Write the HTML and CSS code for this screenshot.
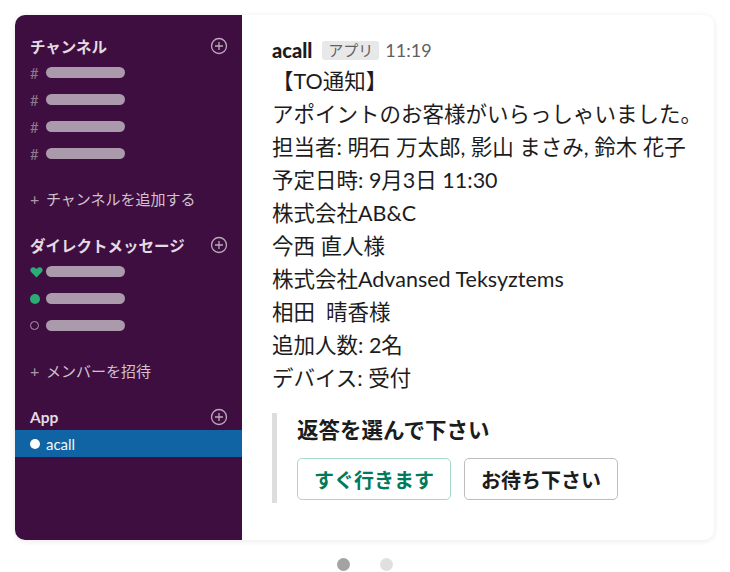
FILE: index.html
```html
<!DOCTYPE html>
<html lang="ja">
<head>
<meta charset="utf-8">
<title>acall Slack</title>
<link rel="stylesheet" href="styles.css">
</head>
<body>
<div class="card">
  <aside class="sidebar">
    <div class="section">
      <div class="sec-head"><span>チャンネル</span><span class="plus-circle"><svg viewBox="0 0 18 18" width="18" height="18"><circle cx="9" cy="9" r="7.5" fill="none" stroke="currentColor" stroke-width="1.3"/><path d="M9 5v8M5 9h8" stroke="currentColor" stroke-width="1.3"/></svg></span></div>
      <div class="row"><span class="mark hash">#</span><span class="bar"></span></div>
      <div class="row"><span class="mark hash">#</span><span class="bar"></span></div>
      <div class="row"><span class="mark hash">#</span><span class="bar"></span></div>
      <div class="row"><span class="mark hash">#</span><span class="bar"></span></div>
    </div>
    <div class="row add"><span class="mark plus">+</span><span>チャンネルを追加する</span></div>

    <div class="section">
      <div class="sec-head"><span>ダイレクトメッセージ</span><span class="plus-circle"><svg viewBox="0 0 18 18" width="18" height="18"><circle cx="9" cy="9" r="7.5" fill="none" stroke="currentColor" stroke-width="1.3"/><path d="M9 5v8M5 9h8" stroke="currentColor" stroke-width="1.3"/></svg></span></div>
      <div class="row"><span class="mark"><svg viewBox="0 0 12 11" width="13" height="12"><path d="M6 10.5 1 5.6C-.4 4.2.3 1 3 1c1.4 0 2.3.8 3 1.8C6.7 1.8 7.6 1 9 1c2.7 0 3.4 3.2 2 4.6z" fill="#2bac76"/></svg></span><span class="bar"></span></div>
      <div class="row"><span class="mark"><span class="dot-on"></span></span><span class="bar"></span></div>
      <div class="row"><span class="mark"><span class="dot-off"></span></span><span class="bar"></span></div>
    </div>
    <div class="row add"><span class="mark plus">+</span><span>メンバーを招待</span></div>

    <div class="section">
      <div class="sec-head"><span>App</span><span class="plus-circle"><svg viewBox="0 0 18 18" width="18" height="18"><circle cx="9" cy="9" r="7.5" fill="none" stroke="currentColor" stroke-width="1.3"/><path d="M9 5v8M5 9h8" stroke="currentColor" stroke-width="1.3"/></svg></span></div>
      <div class="row active"><span class="mark"><span class="dot-white"></span></span><span>acall</span></div>
    </div>
  </aside>

  <main class="main">
    <div class="msg-head">
      <span class="sender">acall</span>
      <span class="badge">アプリ</span>
      <span class="time">11:19</span>
    </div>
    <div class="msg-body">
      <p class="bracket">【TO通知】</p>
      <p>アポイントのお客様がいらっしゃいました。</p>
      <p>担当者: 明石 万太郎, 影山 まさみ, 鈴木 花子</p>
      <p>予定日時: 9月3日 11:30</p>
      <p>株式会社AB&amp;C</p>
      <p>今西 直人様</p>
      <p>株式会社Advansed Teksyztems</p>
      <p>相田&nbsp; 晴香様</p>
      <p>追加人数: 2名</p>
      <p>デバイス: 受付</p>
    </div>
    <div class="attachment">
      <div class="att-title">返答を選んで下さい</div>
      <div class="actions">
        <button class="btn primary">すぐ行きます</button>
        <button class="btn">お待ち下さい</button>
      </div>
    </div>
  </main>
</div>
<div class="pager">
  <span class="pdot on"></span>
  <span class="pdot"></span>
</div>
</body>
</html>
```
FILE: styles.css
```css
* { box-sizing: border-box; }
html, body { margin: 0; padding: 0; background: #ffffff; }
body {
  padding: 15px 16px 0 15px;
  font-family: "Lato", "Noto Sans CJK JP", sans-serif;
  color: #1d1c1d;
}
.card {
  display: flex;
  width: 699px;
  height: 525px;
  border-radius: 10px;
  overflow: hidden;
  background: #fff;
  box-shadow: 0 1px 6px rgba(0,0,0,0.09);
}
.sidebar {
  width: 227px;
  flex: none;
  background: #3f0e40;
  padding-top: 17px;
}
.section { display: flex; flex-direction: column; }
.sec-head {
  height: 27px;
  display: flex;
  align-items: center;
  justify-content: space-between;
  padding: 0 14px 0 15px;
  font-size: 15.5px;
  font-weight: 700;
  color: #e3dbe3;
}
.plus-circle { color: #b9aab9; display: flex; }
.row {
  height: 27px;
  display: flex;
  align-items: center;
  padding-left: 15px;
  font-size: 15px;
  color: #cfc3cf;
}
.mark {
  width: 16px;
  flex: none;
  display: flex;
  align-items: center;
}
.hash { color: #8e7a8f; font-size: 15px; }
.plus { color: #a99aa9; font-size: 16px; }
.bar {
  width: 79px;
  height: 11px;
  border-radius: 6px;
  background: #ab99ac;
}
.add { margin: 18px 0 19px; }
.dot-on { width: 10px; height: 10px; border-radius: 50%; background: #2bac76; }
.dot-off { width: 9px; height: 9px; border-radius: 50%; border: 1.6px solid #ab99ac; }
.dot-white { width: 10px; height: 10px; border-radius: 50%; background: #fff; }
.active { background: #1164a3; color: #f2f6fa; }
.main {
  flex: 1;
  padding: 23px 10px 0 30px;
}
.msg-head {
  display: flex;
  align-items: center;
  height: 24px;
}
.sender { font-weight: 900; font-size: 20px; color: #1d1c1d; }
.badge {
  margin-left: 10px;
  background: #e8e8e8;
  color: #616061;
  font-size: 15px;
  padding: 0 6px;
  border-radius: 3px;
  line-height: 19px;
}
.time { margin-left: 6px; color: #616061; font-size: 18px; }
.msg-body { margin-top: 3px; }
.msg-body p {
  margin: 0;
  font-size: 21.5px;
  line-height: 33px;
  white-space: nowrap;
}
.attachment {
  margin-top: 18px;
  border-left: 5px solid #dddddd;
  padding-left: 20px;
  height: 90px;
}
.att-title {
  font-size: 21.5px;
  font-weight: 700;
  line-height: 26px;
  padding-top: 4px;
}
.actions { display: flex; gap: 13px; margin-top: 15px; }
.btn {
  height: 42px;
  padding: 0 16px;
  font-family: "Lato", "Noto Sans CJK JP", sans-serif;
  font-size: 20px;
  font-weight: 700;
  background: #fff;
  border: 1.5px solid #bdbdbd;
  border-radius: 5px;
  color: #1d1c1d;
}
.btn.primary { color: #007a5a; border-color: #a6d9c3; }
.pager {
  display: flex;
  justify-content: center;
  gap: 30px;
  margin-top: 18px;
  width: 730px;
  margin-left: -15px;
}
.pdot { width: 13px; height: 13px; border-radius: 50%; background: #e0e0e0; }
.pdot.on { background: #a3a3a3; }
```
